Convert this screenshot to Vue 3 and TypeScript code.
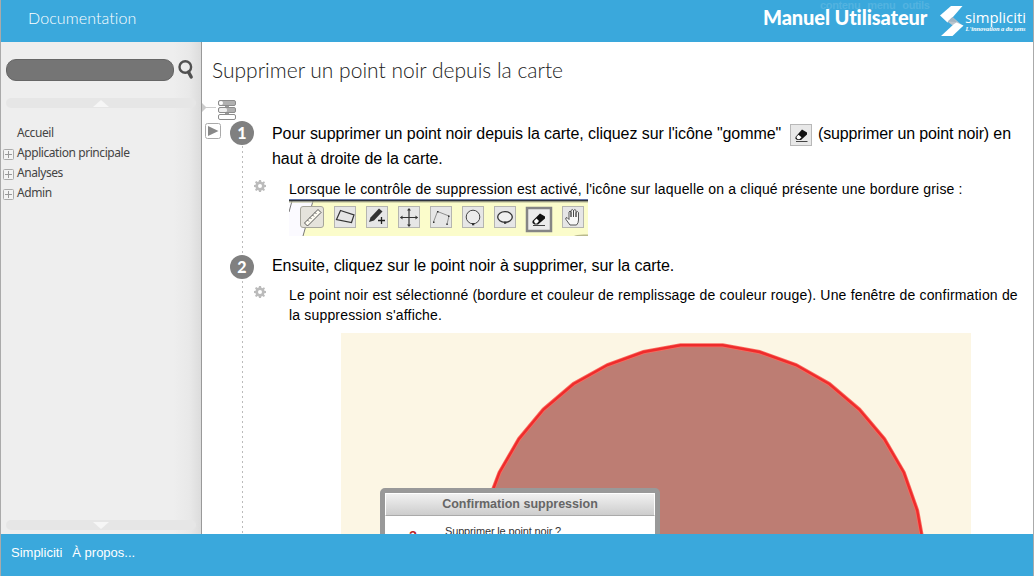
<script setup lang="ts">
interface NavItem {
  label: string
  expandable: boolean
}

const nav: NavItem[] = [
  { label: 'Accueil', expandable: false },
  { label: 'Application principale', expandable: true },
  { label: 'Analyses', expandable: true },
  { label: 'Admin', expandable: true },
]

const gear =
  'M5 0h2l.4 1.7 1 .5L10 1.2 11 2.400 10 3.800l.4 1L12 5v2l-1.600.300-.5 1L11 9.700 9.800 11 8.300 10l-1 .4L7 12H5l-.3-1.600-1-.4L2.200 11 1 9.800 2 8.300l-.4-1L0 7V5l1.600-.3.4-1L1 2.300 2.200 1 3.700 2l1-.4zM6 4a2 2 0 1 0 0 4a2 2 0 1 0 0-4z'
</script>

<template>
  <div class="page">
    <header class="header">
      <span class="doc">Documentation</span>
      <span class="skip"><span>contenu</span><span>menu</span><span>outils</span></span>
      <span class="manual">Manuel Utilisateur</span>
      <svg class="logo" width="88" height="32" viewBox="0 0 88 32">
        <path d="M11 1H22.500L12.500 12.500L7.500 17.500L0 10.500z" fill="#fff" />
        <path d="M12.500 12L23 21L18 24.500L8 17z" fill="#b9c5ce" />
        <path d="M7.500 16.500L17 17L12.500 12z" fill="#a3b4c1" />
        <path d="M16.500 17.500L23.500 20.500L12.500 31H1L14 19z" fill="#fff" />
        <text x="25" y="18" class="brand" textLength="61" lengthAdjust="spacingAndGlyphs">simpliciti</text>
        <text x="25.500" y="26" class="tag" textLength="60" lengthAdjust="spacingAndGlyphs">L'innovation a du sens</text>
      </svg>
    </header>

    <div class="body">
      <aside class="side">
        <div class="search">
          <div class="field"></div>
          <svg width="16" height="22" viewBox="0 0 16 22">
            <circle cx="7.300" cy="8" r="5.800" fill="none" stroke="#505050" stroke-width="2.400" />
            <path d="M10.500 13L13.200 18" stroke="#505050" stroke-width="3.400" stroke-linecap="round" />
          </svg>
        </div>
        <div class="scroll">
          <svg width="16" height="7" viewBox="0 0 16 7"><path d="M0 7L8 0L16 7z" fill="#f6f6f6" /></svg>
        </div>
        <nav class="nav">
          <div v-for="item in nav" :key="item.label" class="item">
            <span class="box">
              <svg v-if="item.expandable" width="11" height="11" viewBox="0 0 11 11">
                <rect x=".5" y=".5" width="10" height="10" rx="1" fill="#f4f4f4" stroke="#aaa" />
                <path d="M2 5.500H9M5.500 2V9" stroke="#999" />
              </svg>
            </span>
            <span>{{ item.label }}</span>
          </div>
        </nav>
        <div class="scroll">
          <svg width="16" height="7" viewBox="0 0 16 7"><path d="M0 0L8 7L16 0z" fill="#f6f6f6" /></svg>
        </div>
      </aside>

      <main class="main">
        <h1 class="title">Supprimer un point noir depuis la carte</h1>
        <div class="tools">
          <svg width="36" height="21" viewBox="0 0 36 21">
            <path d="M0 3L4.500 7.500L0 12z" fill="#ccc" />
            <path d="M4 7.500H14" stroke="#ccc" />
            <path d="M25 5v11" stroke="#999" stroke-width="4" />
            <g stroke="#8c8c8c" fill="#b0b0b0">
              <rect x="16.500" y=".5" width="17" height="5" rx="1.500" />
              <rect x="16.500" y="7.500" width="17" height="5" rx="1.500" />
              <rect x="16.500" y="14.500" width="17" height="5" rx="1.500" fill="#fff" />
            </g>
            <rect x="17" y="1" width="4" height="4" rx="2" fill="#fff" />
            <rect x="17" y="8" width="8" height="4" rx="1.500" fill="#eee" />
          </svg>
        </div>

        <div class="steps">
          <section class="step">
            <svg class="play" width="16" height="16" viewBox="0 0 16 16">
              <rect x=".5" y=".5" width="15" height="15" rx="2" fill="#fff" stroke="#aaa" />
              <path d="M3 3L13.500 8L3 13z" fill="#888" />
            </svg>
            <span class="num">1</span>
            <div class="head">
              <div class="line">
                <span class="l1">Pour supprimer un point noir depuis la carte, cliquez sur l'icône "gomme"</span>
                <svg class="rubber" width="22" height="22" viewBox="0 0 22 22">
                  <rect x=".5" y=".5" width="21" height="21" fill="#e8e8e8" stroke="#b8b8b8" />
                  <path d="M5.500 13L12 5.500L17 8.500V10.500L11 16H7L5.500 14.500z" fill="#111" />
                  <path d="M6.300 13L8.500 10.800L11.500 13.300L9.500 15.300H7.500z" fill="#fff" />
                  <path d="M6 17.500H17.500" stroke="#444" />
                </svg>
                <span class="l1b">(supprimer un point noir) en</span>
              </div>
              <div class="line l2">haut à droite de la carte.</div>
            </div>
          </section>

          <section class="sub first">
            <svg class="gear" width="12" height="12" viewBox="0 0 12 12"><path :d="gear" fill="#bbb" fill-rule="evenodd" /></svg>
            <div>
              <p class="s1">Lorsque le contrôle de suppression est activé, l'icône sur laquelle on a cliqué présente une bordure grise :</p>
              <svg class="strip" width="299" height="37" viewBox="0 0 299 37">
                <rect width="299" height="37" fill="#fbfccb" />
                <path d="M0 2H24L14 37H0z" fill="#fbfaff" />
                <path d="M24 2L14 37M3 2L0 13" stroke="#777" fill="none" />
                <rect width="299" height="1" fill="#6274a8" />
                <rect y="1" width="299" height="1.600" fill="#30343c" />
                <rect y="2.600" width="299" height="1" fill="#bfc09c" />
                <path d="M285 37Q287 35 299 35.500V37z" fill="#b9b98d" />
                <rect x="11.500" y="7.500" width="23" height="21" rx="2.500" fill="#e5e3dc" stroke="#a6a59b" />
                <g fill="#e6e6e6" stroke="#b5b5b0">
                  <rect x="45.500" y="7.500" width="21" height="21" />
                  <rect x="77.500" y="7.500" width="21" height="21" />
                  <rect x="109.500" y="7.500" width="21" height="21" />
                  <rect x="141.500" y="7.500" width="21" height="21" />
                  <rect x="173.500" y="7.500" width="21" height="21" />
                  <rect x="205.500" y="7.500" width="21" height="21" />
                  <rect x="273.500" y="7.500" width="21" height="21" />
                </g>
                <path d="M15.500 24L29 10.500L32 13.500L18.500 27z" fill="#fffdf3" stroke="#444" stroke-width=".9" />
                <path d="M18.500 21l1.500 1.500M21 18.500l1.500 1.500M23.500 16l1.500 1.500M26 13.500l1.500 1.500" stroke="#444" stroke-width=".8" />
                <g fill="none" stroke="#333">
                  <path d="M51.500 11.500L65 16L62.500 23.500L47.500 20.500z" stroke-width="1.200" />
                  <path d="M120 10V27M111.500 18.500H128.500" stroke-width="1.200" />
                  <path d="M144.500 23L148.500 12.500L160 17L158 25" stroke="#777" stroke-width=".8" />
                  <circle cx="184" cy="18" r="6.800" fill="#ececec" stroke="#444" />
                  <ellipse cx="216" cy="18" rx="7.300" ry="5.300" fill="#f1f1f1" stroke-width="1.300" />
                </g>
                <g fill="#333">
                  <path d="M80 23L81.500 18.500L90 9.500L93.500 12.500L85 21.500z" />
                  <path d="M118 11.500L120 9L122 11.500zM118 25.500L120 28L122 25.500zM113.500 16.500L111 18.500L113.500 20.500zM126.500 16.500L129 18.500L126.500 20.500z" />
                  <rect x="144" y="22.500" width="1.500" height="1.500" />
                  <rect x="148" y="12" width="1.500" height="1.500" />
                  <rect x="159" y="16.500" width="1.500" height="1.500" />
                  <rect x="157.300" y="24.500" width="1.500" height="1.500" />
                  <rect x="183" y="24" width="2.300" height="2.300" />
                  <rect x="215" y="22.500" width="2.300" height="2.300" />
                </g>
                <path d="M92.500 18V25M89 21.500H96" stroke="#222" stroke-width="1.300" />
                <rect x="238" y="9" width="24" height="23" fill="#ececec" stroke="#858585" stroke-width="2.500" />
                <path d="M243.500 22L251 14.500L256 17.500V19.500L249 25.500H245.500L243.500 24z" fill="#111" />
                <path d="M245 22L247.500 19.500L250 22L248 24.500H246z" fill="#fff" />
                <path d="M244 26.500H256" stroke="#444" />
                <path d="M281 26L277 20.500Q276 18.500 278 18.500L280 20.500V13Q281 11 282 13V18V11.500Q283.500 9.500 284.500 11.500V18V11.500Q286 9.500 287 11.500V18V13.500Q288.500 11.500 289.500 13.500V21Q289.500 24 287.500 26z" fill="#f7f7f7" stroke="#444" stroke-width=".9" />
              </svg>
            </div>
          </section>

          <section class="step second">
            <span></span>
            <span class="num n2">2</span>
            <div class="head">
              <div class="line l3">Ensuite, cliquez sur le point noir à supprimer, sur la carte.</div>
            </div>
          </section>

          <section class="sub last">
            <svg class="gear" width="12" height="12" viewBox="0 0 12 12"><path :d="gear" fill="#bbb" fill-rule="evenodd" /></svg>
            <div>
              <p class="s2">Le point noir est sélectionné (bordure et couleur de remplissage de couleur rouge). Une fenêtre de confirmation de</p>
              <p class="s3">la suppression s'affiche.</p>
              <div class="map">
                <svg width="630" height="202" viewBox="0 0 630 202">
                  <path
                    d="M145 215L151.500 158L158.500 139.500L178 106L202.500 76.500L232.500 51L266.500 32L302.500 19L339.500 12.300H381.700L418.500 19L455 32L488.300 51L518.300 76.500L543.200 106L562.800 139.500L576.200 177.500L583 215z"
                    fill="#bd7d73" stroke="#fa6a5e" stroke-width="4" />
                  <path
                    d="M145 215L151.500 158L158.500 139.500L178 106L202.500 76.500L232.500 51L266.500 32L302.500 19L339.500 12.300H381.700L418.500 19L455 32L488.300 51L518.300 76.500L543.200 106L562.800 139.500L576.200 177.500L583 215z"
                    fill="none" stroke="#ee2c2c" stroke-width="2.400" />
                </svg>
                <div class="dialog">
                  <div class="dhead"><span>Confirmation suppression</span></div>
                  <div class="dbody">
                    <span class="mark">?</span>
                    <span class="ask">Supprimer le point noir ?</span>
                  </div>
                </div>
              </div>
            </div>
          </section>
        </div>
      </main>
    </div>

    <footer class="footer"><span class="f1">Simpliciti</span><span class="f2">À propos...</span></footer>
  </div>
</template>

<style>
body {
  margin: 0;
  overflow: hidden;
}
</style>

<style scoped>
.page {
  box-sizing: border-box;
  width: 1034px;
  height: 576px;
  border-left: 1px solid #aaa;
  border-right: 1px solid #aaa;
  overflow: hidden;
  display: flex;
  flex-direction: column;
  background: #fff;
  font-family: "Liberation Sans", Arial, sans-serif;
  color: #000;
  white-space: nowrap;
}
.header {
  position: relative;
  height: 42px;
  flex: none;
  display: flex;
  align-items: flex-start;
  background: #3aa8dc;
  color: #fff;
}
.doc {
  margin-left: 27px;
  width: 735px;
  font: 300 16px/36px Lato, sans-serif;
  letter-spacing: 0.1px;
}
.skip {
  position: absolute;
  left: 819px;
  top: -1px;
  display: flex;
  gap: 7px;
  font-size: 11px;
  line-height: 13px;
  font-weight: 700;
  letter-spacing: -0.35px;
  color: #53b3e0;
}
.manual {
  position: relative;
  width: 177px;
  font: 900 20px/35px Lato, sans-serif;
  letter-spacing: -0.1px;
}
.logo {
  margin-top: 5px;
}
.brand {
  font: 400 15px "Open Sans", sans-serif;
  fill: #fff;
}
.tag {
  font: italic 700 5.500px "Liberation Serif", serif;
  fill: #fff;
}
.body {
  height: 492px;
  flex: none;
  display: flex;
}
.side {
  box-sizing: border-box;
  width: 201px;
  flex: none;
  display: flex;
  flex-direction: column;
  padding: 17px 0 4px;
  border-right: 1px solid #999;
  background: linear-gradient(to right, #eee 172px, #e9e9e9 188px, #dcdcdc 200px);
}
.search {
  display: flex;
  gap: 4px;
  padding-left: 5px;
  height: 22px;
  margin-bottom: 17px;
}
.field {
  box-sizing: border-box;
  width: 168px;
  height: 22px;
  border: 1px solid #666;
  border-radius: 10px;
  background: #757575;
}
.scroll {
  width: 190px;
  height: 10px;
  flex: none;
  margin-left: 5px;
  border-radius: 5px;
  background: #e6e6e6;
  display: flex;
  justify-content: center;
  align-items: center;
}
.nav {
  flex: 1;
  padding-top: 15px;
  font: 12px/20px "Noto Sans", sans-serif;
  color: #444;
}
.item {
  display: flex;
  height: 20px;
  letter-spacing: -0.43px;
}
.box {
  width: 16px;
  padding: 6px 0 0 2px;
  box-sizing: border-box;
  line-height: 0;
}
.main {
  flex: 1;
  overflow: hidden;
}
.title {
  margin: 0 0 0 10px;
  height: 58px;
  font: 300 21px/56px Lato, sans-serif;
  color: #222;
}
.tools {
  height: 21px;
}
.steps {
  height: 413px;
  background: repeating-linear-gradient(to bottom, #bbb 0 2px, transparent 2px 5px) 40px 0 / 1px 100% no-repeat;
}
.step {
  display: grid;
  grid-template-columns: 28px 42px 1fr;
  align-items: start;
}
.play {
  margin: 2px 0 0 3px;
}
.num {
  width: 24px;
  height: 24px;
  border-radius: 12px;
  background: #808080;
  color: #fff;
  text-align: center;
  font: 900 16px/23px Lato, sans-serif;
}
.n2 {
  margin-top: 2px;
}
.line {
  display: flex;
  height: 25px;
  font-size: 16px;
  line-height: 25px;
  letter-spacing: -0.07px;
}
.l1b {
  letter-spacing: -0.13px;
}
.rubber {
  margin: 3px 6px 0 0;
}
.l1 {
  width: 518px;
}
.sub {
  display: grid;
  grid-template-columns: 87px 1fr;
  font-size: 14px;
  line-height: 20px;
  letter-spacing: 0.174px;
}
.first {
  padding-top: 8px;
}
.last {
  padding-top: 6px;
}
.gear {
  margin: 1px 0 0 52px;
}
.sub p {
  margin: 0;
}
.strip {
  display: block;
}
.second {
  padding-top: 17px;
}
.map {
  position: relative;
  width: 630px;
  height: 202px;
  margin: 8px 0 0 52px;
  background: #fcf6e4;
  overflow: hidden;
}
.dialog {
  position: absolute;
  left: 39px;
  top: 155px;
  box-sizing: border-box;
  width: 280px;
  height: 100px;
  border: 5px solid #999;
  border-radius: 5px;
  background: #fff;
  letter-spacing: 0;
}
.dhead {
  box-sizing: border-box;
  height: 23px;
  border: 1px solid #fff;
  border-bottom: 1px solid #aaa;
  background: linear-gradient(#f1f1f1, #cdcdcd);
  text-align: center;
  font-size: 12.500px;
  line-height: 21px;
  font-weight: 700;
  color: #666;
}
.dbody {
  display: flex;
  padding-top: 7px;
  line-height: 16px;
}
.mark {
  width: 36px;
  padding: 5px 0 0 24px;
  color: #b22;
  font-size: 13px;
  font-weight: 700;
}
.ask {
  font-size: 11px;
  letter-spacing: -0.15px;
  color: #333;
}
.footer {
  height: 42px;
  flex: none;
  background: #3aa8dc;
  color: #fff;
  font-size: 13px;
  line-height: 38px;
}
.f1 {
  margin: 0 10px;
}
</style>
